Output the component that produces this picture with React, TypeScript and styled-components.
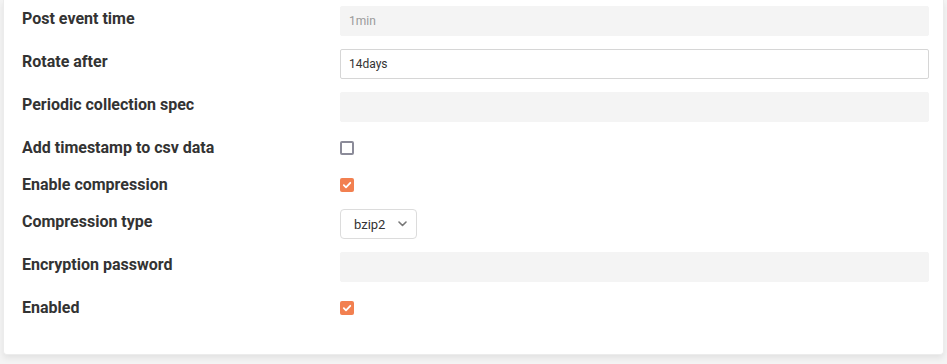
import React from "react";
import styled, { createGlobalStyle } from "styled-components";

const Global = createGlobalStyle`
  html, body { margin: 0; padding: 0; background: #f4f4f4; }
  body { font-family: Roboto, "Liberation Sans", Arial, sans-serif; }
  * { box-sizing: border-box; }
`;

const Page = styled.div`
  width: 947px;
  height: 364px;
  padding: 0 3px 0 3px;
  overflow: hidden;
`;

const Card = styled.div`
  width: 941px;
  background: #ffffff;
  border: 1px solid #ececec;
  border-top: none;
  border-radius: 0 0 4px 4px;
  box-shadow: 0 3px 6px rgba(0, 0, 0, 0.08);
  padding: 6px 14px 35px 18px;
`;

const Row = styled.div<{ $tall?: boolean }>`
  display: grid;
  grid-template-columns: 318px 1fr;
  align-items: start;
  min-height: ${(p) => (p.$tall ? 30 : 24)}px;
  margin-bottom: 13px;
  &:last-child { margin-bottom: 0; }
`;

const Label = styled.div`
  height: 24px;
  padding-top: 1px;
  font-size: 16px;
  font-weight: 700;
  color: #333333;
  line-height: 24px;
`;

const Input = styled.input<{ $disabled?: boolean }>`
  display: block;
  width: 589px;
  height: 30px;
  padding: 0 8px;
  font-family: Roboto, "Liberation Sans", Arial, sans-serif;
  font-size: 12px;
  color: ${(p) => (p.$disabled ? "#9a9a9a" : "#333333")};
  background: ${(p) => (p.$disabled ? "#f4f4f4" : "#ffffff")};
  border: 1px solid ${(p) => (p.$disabled ? "#f4f4f4" : "#d6d6d6")};
  border-radius: 2px;
  outline: none;
`;

const Check = styled.span<{ $checked?: boolean }>`
  display: flex;
  align-items: center;
  justify-content: center;
  width: 14px;
  height: 14px;
  margin-top: 6px;
  border-radius: 2px;
  background: ${(p) => (p.$checked ? "#f28050" : "#ffffff")};
  border: ${(p) => (p.$checked ? "none" : "2px solid #8b8b99")};
`;

const SelectBox = styled.div`
  display: flex;
  align-items: center;
  justify-content: space-between;
  width: 77px;
  height: 30px;
  padding: 0 9px 0 13px;
  border: 1px solid #dcdcdc;
  border-radius: 4px;
  font-size: 13px;
  color: #333333;
`;

const CheckMark = () => (
  <svg width="10" height="10" viewBox="0 0 10 10">
    <path d="M1.8 5.2 L4 7.3 L8.3 2.8" fill="none" stroke="#fff" strokeWidth="1.8" strokeLinecap="round" strokeLinejoin="round" />
  </svg>
);

const Chevron = () => (
  <svg width="9" height="6" viewBox="0 0 9 6">
    <path d="M1 1 L4.5 4.5 L8 1" fill="none" stroke="#777" strokeWidth="1.6" strokeLinecap="round" strokeLinejoin="round" />
  </svg>
);

export default function App() {
  return (
    <Page>
      <Global />
      <Card>
        <Row $tall>
          <Label>Post event time</Label>
          <Input $disabled readOnly value="1min" />
        </Row>
        <Row $tall>
          <Label>Rotate after</Label>
          <Input readOnly value="14days" />
        </Row>
        <Row $tall>
          <Label>Periodic collection spec</Label>
          <Input $disabled readOnly value="" />
        </Row>
        <Row>
          <Label>Add timestamp to csv data</Label>
          <Check />
        </Row>
        <Row>
          <Label>Enable compression</Label>
          <Check $checked><CheckMark /></Check>
        </Row>
        <Row $tall>
          <Label>Compression type</Label>
          <SelectBox>
            <span>bzip2</span>
            <Chevron />
          </SelectBox>
        </Row>
        <Row $tall>
          <Label>Encryption password</Label>
          <Input $disabled readOnly value="" />
        </Row>
        <Row>
          <Label>Enabled</Label>
          <Check $checked><CheckMark /></Check>
        </Row>
      </Card>
    </Page>
  );
}
